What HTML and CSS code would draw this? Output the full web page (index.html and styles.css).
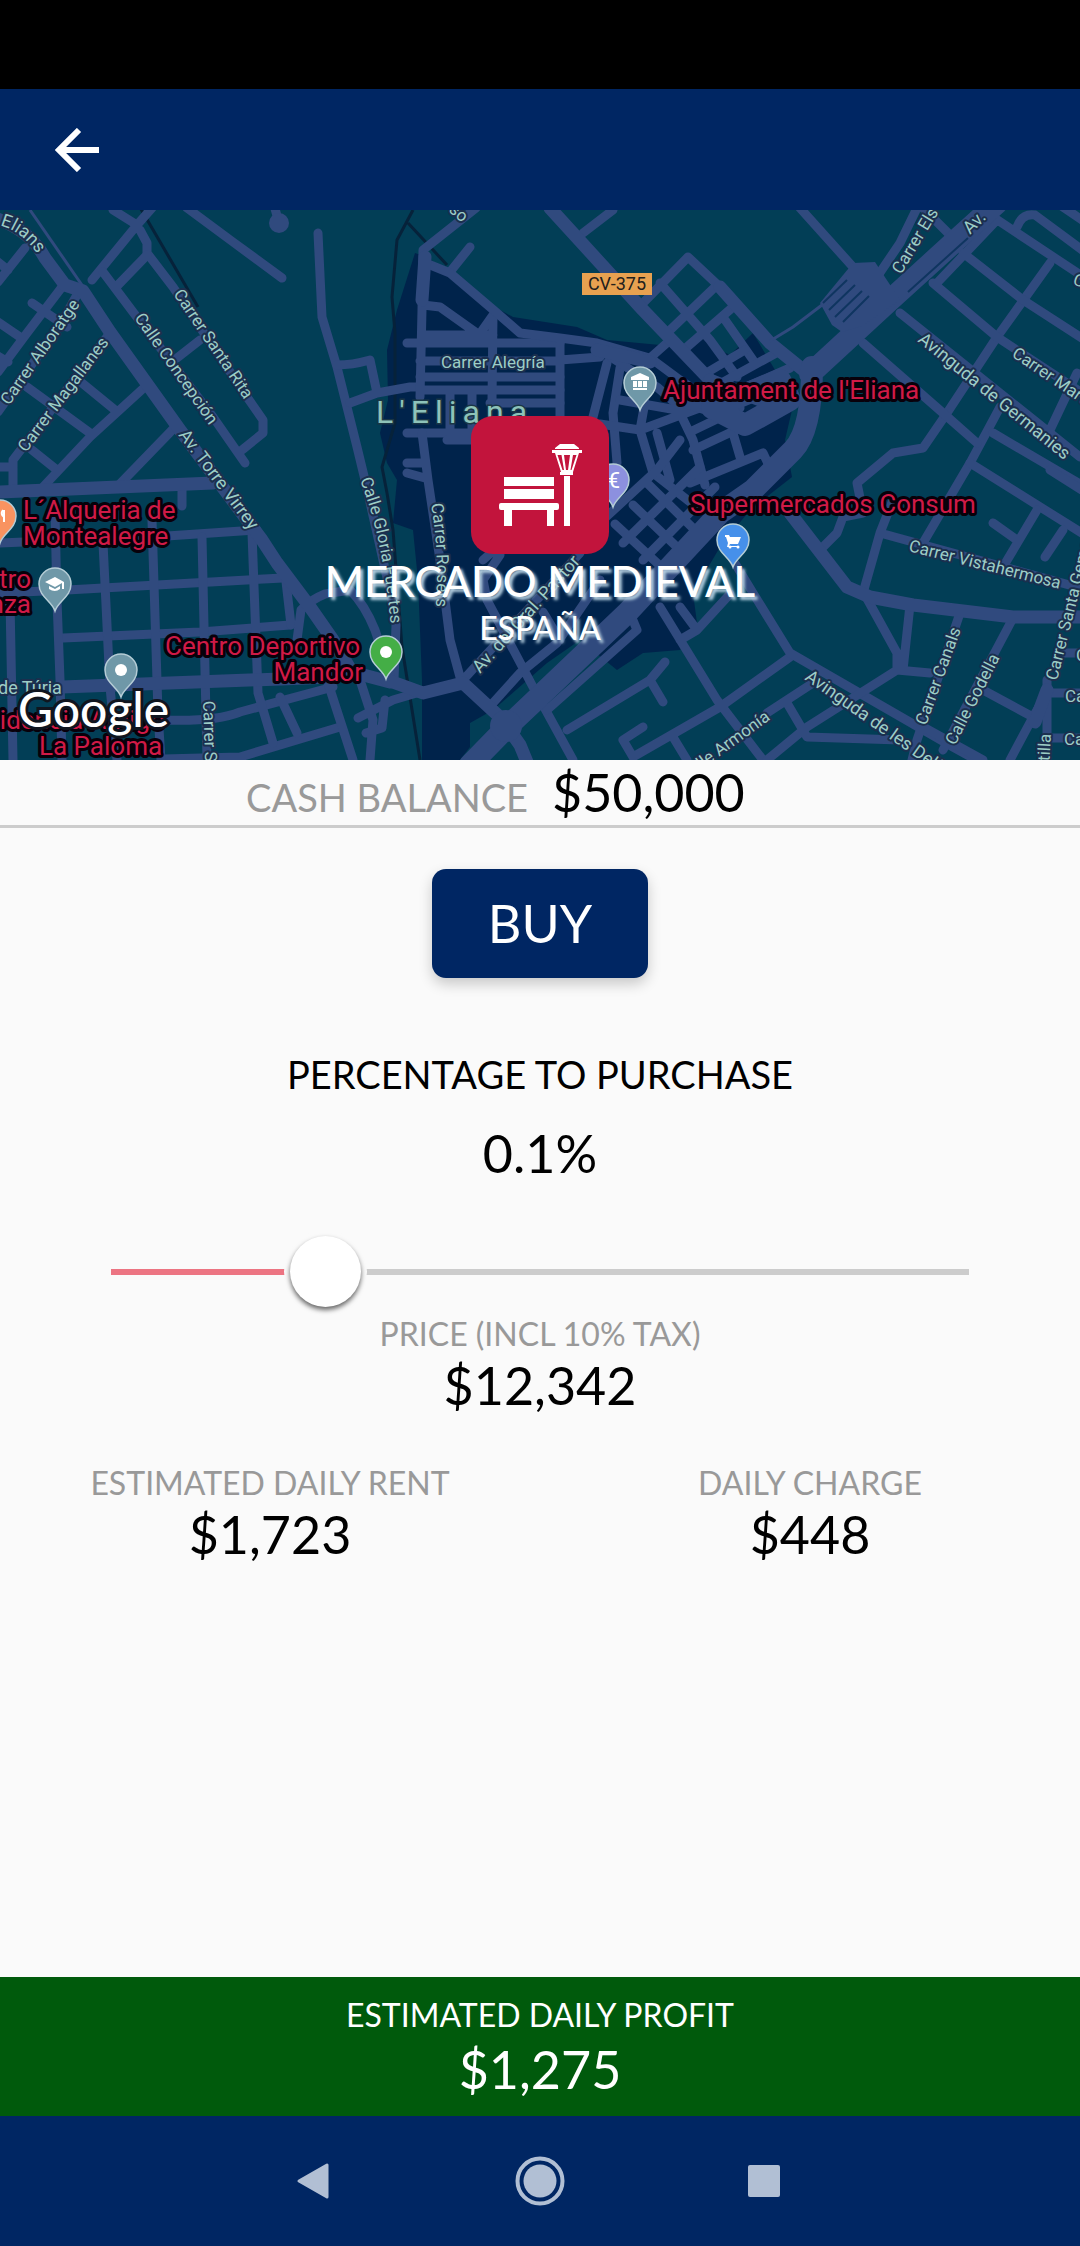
FILE: index.html
```html
<!DOCTYPE html>
<html lang="en">

<head>
    <meta charset="UTF-8">
    <meta name="viewport" content="width=device-width, initial-scale=1.0">
    <title>Mercado Medieval</title>

    <link rel="stylesheet" href="styles.css">
</head>

<body>

    <div class="status-bar"></div>

    <header class="app-bar">
        <button type="button" class="back" aria-label="Back">
            <svg width="44" height="44" viewBox="0 0 44 44" fill="none" stroke="#fff" stroke-width="6">
                <path d="M44 22H5M24 2 4 22l20 20" />
            </svg>
        </button>
    </header>

    <section class="map">
        <svg class="map-canvas" viewBox="0 210 1080 550" preserveAspectRatio="xMidYMid slice">
            <defs>
                <g id="pin">
                    <path d="M0 27C-3 17-16 13-16 0A16 16 0 0 1 16 0C16 13 3 17 0 27Z" stroke="#b5cdd6" stroke-width="1.5" />
                </g>
                <path id="elians" d="M-24 226Q18 216 46 268" />
                <path id="gloria" d="M360 480Q384 540 391 630" />
                <path id="rosers" d="M431 504Q441 560 434 630" />
            </defs>

            <!-- town area -->
            <path class="town" d="M415 253 397 310 387 350 388 400 380 433 387 463 397 480 393 523 413 530 418 580 422 680 422 760 460 760 470 747 470 723 493 710 547 663 580 640 617 670 643 653 680 650 697 623 693 593 720 547 750 510 792 477 785 440 792 410 775 370 753 333 730 355 720 350 697 333 685 345 660 345 607 340 577 327 513 317 500 310 427 257Z" />

            <!-- railway -->
            <g class="rail">
                <path d="M138 204 198 307M413 210 397 240 392 297 395 333 395 423 382 467 387 493 393 530 402 647 420 760M408 223 447 265" />
            </g>
            <path class="lane" d="M30 210 84 288" />

            <!-- streets -->
            <g class="street">
                <path d="M113 210 137 225 152 208M137 225 92 280M140 230 147 243 147 253 173 287 247 397 263 420 263 433 242 450" />
                <path d="M103 272 133 312 213 417 245 463M147 255 118 285M177 358 200 340" />
                <path d="M187 208 233 242 282 278M274 205 279 223M318 233 322 317 337 367 357 447 365 480 392 600 396 625 394 680" />
                <path d="M337 365Q352 365 370 360L377 393M350 403 377 393 410 387 420 387" />
                <path d="M25 248-2 282M-2 262 8 270M62 287 27 333-2 372M32 303 67 327M-2 322 20 337M78 293 60 325-2 412M110 333 13 460 13 490M-2 467 13 467M-2 356 8 362" />
                <path d="M27 387 90 433M82 383 115 410M147 385 90 437 43 487M32 450 57 470M177 425 117 487M182 487 182 506" />
                <path d="M-2 543 167 536 257 530M-2 593 67 590 283 578M63 638 200 632 290 625M163 720Q215 722 240 712L333 687M163 759 240 757 340 727" />
                <path d="M55 513 57 600 60 680 62 760M103 543 110 687 117 760M152 520 158 713 161 760M202 537 207 760M252 533 258 693 273 743M285 573 291 625M10 600 13 760M280 697 297 733M327 680 353 760" />
                <path d="M297 640 301 610Q310 600 325 594L350 590Q365 605 375 630L390 675M360 680 373 720 370 760M358 718 393 700 420 692M385 700 382 728 366 733" />
                <path d="M476 208 423 250 422 310 420 397M450 272 470 247M423 305 440 307 478 334M481 332 493 315 492 400M423 335H493M407 343H560M420 361H560M420 377H560M420 390H560M490 403H560M407 433H500M450 393V430M472 393V430" />
                <path d="M423 262 450 273 497 313 520 333 560 338 597 343 653 359M560 340V425M447 440H500M560 360 600 357M607 363 593 417 590 440M620 368 613 413 617 463" />
                <path d="M583 233 613 210M643 303 688 257 720 287M660 283 710 340 737 377M667 333 715 287M687 347 733 307M723 317 753 360M597 348 657 387 680 407M653 360 680 380 710 400" />
                <path d="M598 350 640 356M620 400 677 410 733 400M640 430 713 403 740 398M600 424 640 430 645 402M640 430 653 473 690 502M657 433 670 480M680 413 693 440 705 485M690 432 740 408M693 450 740 428M690 483 763 453 772 472M733 433 740 457" />
                <path d="M708 372 745 350M718 385 778 352M725 396 790 368M650 358 668 342" />
                <path d="M605 518 657 470 680 440M623 543 700 467M643 560 715 487M633 505 680 550M647 483 700 535M615 524 670 575" />
                <path d="M422 433 428 480 440 560 450 640 460 677M407 463H425M407 473 425 478M463 680 580 553M493 703 520 673 557 643 600 580M483 560 500 545M487 600 483 580 500 555M487 600 533 687 573 760M543 612 560 640" />
                <path d="M547 710 637 630 632 618M567 730 650 680 665 662M650 680 663 702M660 607 717 700 763 760M633 757 720 707 790 657M643 727 623 740 633 757M673 737 687 760M680 607 697 630 730 594M680 640 697 630" />
                <path d="M733 560 753 593 790 653 953 747 980 762M863 593 880 533 893 500M880 533 1080 588" />
                <path d="M865 595 897 653 897 670 930 673M910 605 903 670M897 670 807 727 767 760M767 713 813 683M787 703 807 737 900 740M960 613 917 740 912 760M1012 620 943 750M983 690 1033 717 1047 693H1080M1033 717 1010 760M1047 680V740M1047 738H1080M925 728 983 760M1065 653H1080" />
                <path d="M820 550 837 533 843 517 863 513 857 483 893 453 923 448 947 413 997 337 1050 263M923 543 960 480 970 463 1000 407" />
                <path d="M863 343 943 413 977 443M900 313 1080 457M933 283 997 337 1085 395M963 253 1023 300 1085 340M993 217 1085 278M1017 227Q1022 213 1035 215L1085 252M937 283 997 220M1050 430 1077 373M993 433 1085 487M970 463 1085 535M1060 205 1085 222" />
                <path d="M1037 510 1003 567M993 523 1017 540M1063 530 1045 557M1050 470 1085 492M800 208 853 267 880 297M917 208 900 243 877 277M920 205 950 235" />
            </g>

            <g class="street road">
                <path d="M-5 218Q30 230 45 258L65 285 83 291 110 332 180 430 262 540 277 563 310 607 333 640 352 672 390 682" />
                <path d="M-2 492 213 483M62 687 333 677M387 680 423 693 463 683 503 720M550 208 643 310 710 380M720 287 770 343 807 373M790 513 847 587 870 597 913 605 1013 617 1085 617M425 257 422 300" />
                <path d="M506 725 520 745 527 762M1047 690 1035 722M597 350 650 362M680 400 745 420M710 380 760 400" />
            </g>

            <g class="street avenue">
                <path d="M812 367Q812 430 793 450L753 490 720 513 627 613 543 693 507 727 470 765M810 374 887 303 953 243 997 203" />
                <path d="M712 408 780 380 790 400 745 425Z" />
            </g>
            <path class="plaza" d="M820 303 853 263 875 262 900 300 862 326 842 332 832 325Z" />
            <path class="lane" d="M822 305 793 327 770 341" />
            <path class="stripe" d="M823 303 847 280M829 310 855 285M835 317 862 291M843 322 869 296M908 292 968 238" />
            <circle class="plaza" cx="279" cy="223" r="10" />
            <circle class="plaza" cx="506" cy="726" r="16" />

            <!-- street names -->
            <g class="street-name">
                <text class="large"><textPath href="#elians">de Elians</textPath></text>
                <text transform="translate(173 294) rotate(56)">Carrer Santa Rita</text>
                <text transform="translate(134 318) rotate(55)">Calle Concepción</text>
                <text transform="translate(9 406) rotate(-55)">Carrer Alboratge</text>
                <text transform="translate(26 453) rotate(-53)">Carrer Magallanes</text>
                <text class="large" transform="translate(178 435) rotate(53)">Av. Torre Virrey</text>
                <text x="441" y="368">Carrer Alegría</text>
                <text><textPath href="#gloria">Calle Gloria Fuertes</textPath></text>
                <text><textPath href="#rosers">Carrer Rosers</textPath></text>
                <text class="large" transform="translate(480 674) rotate(-48)">Av. del Gral. Pastor</text>
                <text transform="translate(901 275) rotate(-59)">Carrer Els</text>
                <text class="large" transform="translate(970 235) rotate(-45)">Av.</text>
                <text class="large" transform="translate(917 341) rotate(39)">Avinguda de Germanies</text>
                <text transform="translate(1011 356) rotate(34)">Carrer Martí</text>
                <text transform="translate(1072 284) rotate(20)">C</text>
                <text transform="translate(908 551) rotate(14)">Carrer Vistahermosa</text>
                <text transform="translate(1057 681) rotate(-76)">Carrer Santa Gema</text>
                <text transform="translate(926 726) rotate(-70)">Carrer Canals</text>
                <text transform="translate(955 746) rotate(-63)">Calle Godella</text>
                <text class="large" transform="translate(804 679) rotate(35)">Avinguda de les Delícies</text>
                <text transform="translate(771 719) rotate(-36)" text-anchor="end">Calle Armonía</text>
                <text transform="translate(203 701) rotate(88)">Carrer San</text>
                <text transform="translate(1051 734) rotate(-87)" text-anchor="end">Castilla</text>
                <text transform="translate(448 211) rotate(40)">so</text>
                <text x="1076" y="661">C</text>
                <text x="1065" y="702">Ca</text>
                <text x="1064" y="745">Ca</text>
                <text class="large" x="-2" y="694">de Túria</text>
            </g>
            <text class="town-name" x="376" y="423">L'Eliana</text>

            <rect x="582" y="273" width="70" height="22" fill="#e8a150" />
            <text class="shield" x="617" y="290">CV-375</text>

            <!-- places -->
            <g class="place">
                <text x="663" y="399">Ajuntament de l'Eliana</text>
                <text x="690" y="513">Supermercados Consum</text>
                <text x="23" y="519">L´Alqueria de</text>
                <text x="23" y="545">Montealegre</text>
                <text x="31" y="588" text-anchor="end">Centro</text>
                <text x="31" y="613" text-anchor="end">Enseñanza</text>
                <text x="165" y="655">Centro Deportivo</text>
                <text x="363" y="681" text-anchor="end">Mandor</text>
                <text x="165" y="729" text-anchor="end">Residencia Amigo</text>
                <text x="39" y="755">La Paloma</text>
            </g>

            <use href="#pin" x="640" y="383" fill="#6f98a8" />
            <path fill="#fff" d="M631 380v-3l9-4 9 4v3zM633 381h4v6h-4zM638 381h4v6h-4zM643 381h4v6h-4zM633 388h14v2h-14z" />
            <use href="#pin" x="55" y="584" fill="#6f98a8" />
            <path fill="#fff" d="m45 582 10-5 9 5v7h-2v-6l-7 4zM49 586v3q6 4 11 0v-3l-5 3z" />
            <use href="#pin" x="121" y="670" fill="#6f98a8" />
            <circle cx="121" cy="670" r="6" fill="#fff" />
            <use href="#pin" x="386" y="652" fill="#44ae46" />
            <circle cx="386" cy="652" r="6" fill="#fff" />
            <use href="#pin" x="733" y="540" fill="#4690ea" />
            <path fill="#fff" d="M725 535h4l1 2h11l-3 7h-8l-1 2h10v1h-12l1-4-2-6h-1z" />
            <circle cx="730" cy="547" r="1.5" fill="#fff" />
            <circle cx="738" cy="547" r="1.5" fill="#fff" />
            <use href="#pin" x="613" y="480" fill="#8c90df" />
            <text class="euro" x="614" y="488">€</text>
            <use href="#pin" x="0" y="516" fill="#f99360" />
            <path d="M4 510v12M3 510q-3 4 1 7" stroke="#fff" stroke-width="2" fill="none" />

            <text class="google" x="18" y="727">Google</text>
        </svg>

        <div class="place-card">
            <svg class="place-icon" viewBox="0 0 138 138" fill="#fff">
                <path d="M33 61H83V70H79V73H83V83H33V73H38V70H33ZM38 70V73H79V70Z" fill-rule="evenodd" />
                <path d="M30 87H86Q88 87 88 89V92Q88 94 86 94H83V110H76V94H41V110H33V94H30Q28 94 28 92V89Q28 87 30 87Z" />
                <path d="M93 60H99V110H93ZM89 56H102V59H89ZM84 32 89 28H103L108 32V33H84ZM81 34H111V37H81Z" />
                <path d="M84 37H108L102 56H90ZM86.500 39 91.500 54H93L90.500 39ZM93 39 95 54H97L99 39ZM102 39 99.500 54H100.500L105.500 39Z" fill-rule="evenodd" />
            </svg>
            <h1>MERCADO MEDIEVAL</h1>
            <h2>ESPAÑA</h2>
        </div>
    </section>

    <section class="cash">
        <span class="cash-label">CASH BALANCE</span>
        <span class="amount">$50,000</span>
    </section>

    <main>
        <button type="button" class="buy">BUY</button>

        <label class="percent-label" for="percent">PERCENTAGE TO PURCHASE</label>
        <output class="amount percent-value" for="percent">0.1%</output>
        <input type="range" id="percent" class="slider" min="0" max="100" step="0.1" value="22.7">

        <div class="figure">
            <span class="label">PRICE (INCL 10% TAX)</span>
            <span class="amount">$12,342</span>
        </div>

        <div class="estimates">
            <div class="figure">
                <span class="label">ESTIMATED DAILY RENT</span>
                <span class="amount">$1,723</span>
            </div>
            <div class="figure">
                <span class="label">DAILY CHARGE</span>
                <span class="amount">$448</span>
            </div>
        </div>
    </main>

    <footer class="profit">
        <span class="label">ESTIMATED DAILY PROFIT</span>
        <span class="amount">$1,275</span>
    </footer>

    <nav class="system-nav">
        <button type="button" aria-label="Back">
            <svg width="50" height="50" viewBox="0 0 50 50" fill="#b1bfd4" stroke="#b1bfd4" stroke-width="3" stroke-linejoin="round">
                <path d="M36 9V41L8 25Z" />
            </svg>
        </button>
        <button type="button" aria-label="Home">
            <svg width="50" height="50" viewBox="0 0 50 50">
                <circle cx="25" cy="25" r="22.500" fill="none" stroke="#b1bfd4" stroke-width="4" />
                <circle cx="25" cy="25" r="16.500" fill="#b1bfd4" />
            </svg>
        </button>
        <button type="button" aria-label="Recent apps">
            <svg width="50" height="50" viewBox="0 0 50 50" fill="#b1bfd4">
                <rect x="9" y="9" width="32" height="32" rx="2" />
            </svg>
        </button>
    </nav>

</body>

</html>
```

FILE: styles.css
```css
* {
    box-sizing: border-box;
}

body {
    margin: 0;
    min-height: 100vh;
    display: flex;
    flex-direction: column;
    background-color: #fafafa;
    color: #000;
    font-family: Lato, sans-serif;
}

button {
    border: 0;
    background: none;
    padding: 0;
    font-family: inherit;
    cursor: pointer;
}

svg {
    display: block;
}

.status-bar {
    height: 89px;
    background-color: #000;
}

.app-bar {
    display: flex;
    align-items: center;
    height: 121px;
    padding: 0 55px;
    background-color: #002663;
}

/* map */
.map {
    display: grid;
    height: 550px;
    overflow: hidden;
    background-color: #023e56;
}

.map-canvas,
.place-card {
    grid-area: 1 / 1;
}

.map-canvas {
    width: 100%;
    height: 550px;
    font-family: Roboto, sans-serif;
}

.town {
    fill: #00234b;
}

.street {
    fill: none;
    stroke: #304a7e;
    stroke-width: 9px;
    stroke-linecap: round;
    stroke-linejoin: round;
}

.road {
    stroke-width: 13px;
}

.avenue {
    stroke-width: 22px;
}

.plaza {
    fill: #304a7e;
}

.rail {
    fill: none;
    stroke: #06223a;
    stroke-width: 3px;
}

.lane {
    fill: none;
    stroke: #304a7e;
    stroke-width: 3px;
}

.stripe {
    fill: none;
    stroke: #0f3560;
    stroke-width: 2px;
}

.street-name {
    font-size: 17px;
    fill: #9dcdc6;
    stroke: #1b2f4e;
    stroke-width: 4px;
    stroke-linejoin: round;
    paint-order: stroke;
}

.street-name .large {
    font-size: 18px;
}

.town-name {
    font-size: 32px;
    letter-spacing: 6px;
    fill: #8ec3b9;
    stroke: #1a3646;
    stroke-width: 3px;
    paint-order: stroke;
}

.shield {
    font-size: 18px;
    text-anchor: middle;
    fill: #22201c;
}

.place {
    font-size: 26px;
    fill: #d01a46;
    stroke: #08000a;
    stroke-width: 6px;
    stroke-linejoin: round;
    paint-order: stroke;
}

.euro {
    font-size: 22px;
    text-anchor: middle;
    fill: #fff;
}

.google {
    font-family: Lato, sans-serif;
    font-size: 48px;
    font-weight: 500;
    fill: #fff;
    stroke: #10151f;
    stroke-width: 6px;
    paint-order: stroke;
}

.place-card {
    display: flex;
    flex-direction: column;
    align-items: center;
    justify-content: center;
    padding-top: 94px;
    color: #fff;
    text-shadow: 3px 3px 3px #b4cfe0;
}

.place-icon {
    width: 138px;
    height: 138px;
    border-radius: 22px;
    background-color: #c2143c;
}

.place-card h1,
.place-card h2 {
    margin: 0;
    font-weight: 500;
}

.place-card h1 {
    font-size: 42px;
    line-height: 54px;
}

.place-card h2 {
    font-size: 32px;
    line-height: 40px;
}

/* figures */
.amount {
    font-size: 52px;
    line-height: 62px;
}

.label {
    font-size: 32px;
    line-height: 40px;
    color: #999;
}

.figure {
    display: flex;
    flex-direction: column;
    align-items: center;
}

.cash {
    display: grid;
    grid-template-columns: 1fr 1fr;
    align-items: baseline;
    column-gap: 24px;
    height: 68px;
    padding-top: 1px;
    border-bottom: 3px solid #ccc;
}

.cash-label {
    font-size: 38px;
    text-align: right;
    color: #999;
}

main {
    flex: 1;
    display: flex;
    flex-direction: column;
    align-items: center;
    padding-top: 41px;
}

.buy {
    padding: 22px 56px;
    border-radius: 14px;
    background-color: #002663;
    box-shadow: 0 6px 14px rgba(0, 0, 0, .2);
    color: #fff;
    font-size: 52px;
    line-height: 65px;
}

.percent-label {
    margin-top: 72px;
    font-size: 38px;
    line-height: 48px;
}

.percent-value {
    margin: 24px 0 52px;
}

/* slider */
.slider {
    -webkit-appearance: none;
    appearance: none;
    width: calc(100% - 222px);
    height: 71px;
    margin: 0 0 7px;
    background: none;
}

.slider::-webkit-slider-runnable-track {
    height: 6px;
    background: linear-gradient(to right, #ec7482 25%, #ccc 25%);
}

.slider::-webkit-slider-thumb {
    -webkit-appearance: none;
    width: 71px;
    height: 71px;
    margin-top: -33px;
    border-radius: 50%;
    background-color: #fff;
    box-shadow: 0 3px 5px rgba(0, 0, 0, .6), 0 0 0 6px #fafafa;
}

.estimates {
    display: grid;
    grid-template-columns: 1fr 1fr;
    width: 100%;
    margin-top: 47px;
}

.profit {
    display: flex;
    flex-direction: column;
    align-items: center;
    padding: 15px 0 16px;
    background-color: #005a0c;
    color: #fff;
}

.profit .label {
    line-height: 46px;
    color: #fff;
}

/* system buttons */
.system-nav {
    display: flex;
    justify-content: center;
    align-items: center;
    gap: 174px;
    height: 130px;
    background-color: #002663;
}
```
